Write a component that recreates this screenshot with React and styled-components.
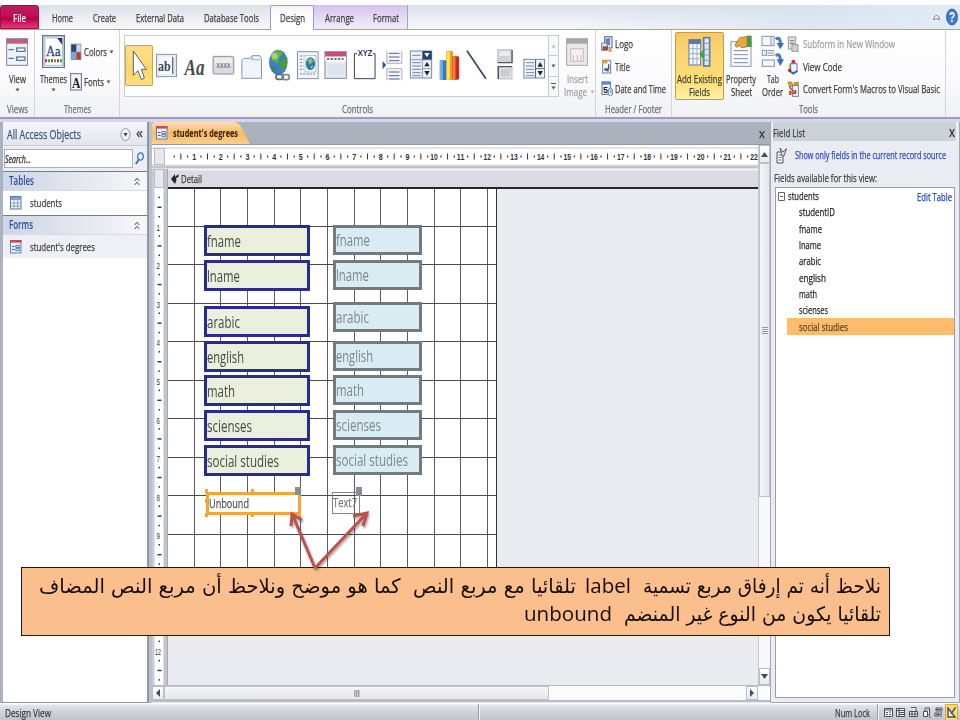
import React, { useLayoutEffect, useRef } from "react";
import styled, { createGlobalStyle, css } from "styled-components";

const Global = createGlobalStyle`
  * { box-sizing: border-box; }
  html, body { margin: 0; padding: 0; }
  body { width: 960px; height: 720px; overflow: hidden; background: #fff; font-family: "Open Sans", "Noto Sans", sans-serif; }
  svg { display: block; flex: none; }
`;

/* ---------- text that condenses itself to a set width ---------- */
const FitBox = styled.span`
  display: block;
  flex: none;
  direction: ltr;
  text-align: left;
  width: ${(p) => p.$w}px;
  height: ${(p) => p.$h || 14}px;
  line-height: ${(p) => p.$h || 14}px;
  margin: ${(p) => p.$m || "0"};
  font-size: ${(p) => p.$s || 11.5}px;
  font-weight: ${(p) => p.$b || 400};
  font-style: ${(p) => (p.$i ? "italic" : "normal")};
  font-family: ${(p) => p.$f || "inherit"};
  color: ${(p) => p.$c || "#3b3b3b"};
  -webkit-text-stroke: ${(p) => (p.$f || p.$s > 15 || p.$b ? 0 : 0.25)}px currentColor;
`;
const FitInner = styled.span`
  display: inline-block;
  white-space: pre;
  transform-origin: 0 50%;
`;
function Fit({ w, h, s, b, i, c, m, f, dir, children }) {
  const ref = useRef(null);
  useLayoutEffect(() => {
    const el = ref.current;
    el.style.transform = "none";
    el.style.transform = `scaleX(${w / el.getBoundingClientRect().width})`;
  }, [w, children]);
  return (
    <FitBox $w={w} $h={h} $s={s} $b={b} $i={i} $c={c} $m={m} $f={f}>
      <FitInner ref={ref} dir={dir}>{children}</FitInner>
    </FitBox>
  );
}

function Icon({ x, y, w, h, children }) {
  return (
    <svg width={w / 3} height={h / 3} viewBox={`${x} ${y} ${w} ${h}`}>
      {children}
    </svg>
  );
}

const Down = ({ c = "#555" }) => (
  <svg width="5" height="4" viewBox="0 0 5 4"><path d="M0.5 0.5H4.5L2.5 3.5Z" fill={c} /></svg>
);

/* ---------- page ---------- */
const Page = styled.div`
  position: relative;
  width: 960px;
  height: 720px;
  padding-top: 5px;
  display: flex;
  flex-direction: column;
  background: #fdfdfe;
  overflow: hidden;
`;

/* ---------- ribbon tabs ---------- */
const TabStrip = styled.div`
  height: 25px;
  flex: none;
  display: flex;
  background: linear-gradient(90deg, rgba(255,255,255,0) 60%, rgba(213,226,241,.7) 84%, rgba(225,236,248,.9)), linear-gradient(#d9e2e8, #e9ecf0 45%, #f6f7fa);
  border-bottom: 1px solid #ab98cf;
`;
const RibbonTab = styled.div`
  width: ${(p) => p.$w}px;
  flex: none;
  height: 24px;
  display: flex;
  align-items: center;
  justify-content: center;
  padding-top: 2px;
  ${(p) => p.$kind === "file" && css`
    background: linear-gradient(#b52257, #c40d54 45%, #b5003f 55%, #df3a80);
    border: 1px solid #a30c45;
    border-radius: 3px 3px 0 0;
  `}
  ${(p) => p.$kind === "ctx" && css`background: linear-gradient(#d3c4ee, #e6def5 60%, #f1edf9);`}
  ${(p) => p.$kind === "active" && css`
    height: 25px;
    padding-top: 0;
    background: linear-gradient(#f6f2fc, #fff 50%);
    border: 1px solid #a993cf;
    border-bottom: 0;
    border-radius: 2px 2px 0 0;
  `}
`;
const CtxEnd = styled.div`width: 1px; background: #a9a0c4; height: 24px;`;
const TabRight = styled.div`
  margin-left: auto;
  display: flex;
  align-items: center;
  gap: 6px;
  padding-right: 2px;
`;

/* ---------- ribbon ---------- */
const Ribbon = styled.div`
  height: 89px;
  flex: none;
  display: flex;
  background: linear-gradient(#fff, #fbfbfd 55%, #f0f1f5);
  border-bottom: 2px solid #a397c6;
`;
const Group = styled.div`
  width: ${(p) => p.$w}px;
  flex: none;
  display: flex;
  flex-direction: column;
  border-right: 1px solid #d5d3de;
`;
const GroupMain = styled.div`height: 72px; display: flex; padding: ${(p) => p.$p || "0"};`;
const GroupName = styled.div`height: 15px; display: flex; justify-content: center;`;
const BigButton = styled.div`
  width: ${(p) => p.$w}px;
  height: 68px;
  flex: none;
  margin: ${(p) => p.$m || "0"};
  padding-top: ${(p) => p.$t ?? 3}px;
  display: flex;
  flex-direction: column;
  align-items: center;
  ${(p) => p.$on && css`
    border: 1px solid #c59b3c;
    border-radius: 2px;
    background: linear-gradient(#f8c866, #fbd674 35%, #fddf79 75%, #fff3a6);
  `}
`;
const IconSlot = styled.div`height: 35px; display: flex; align-items: center;`;
const SmallStack = styled.div`display: flex; flex-direction: column; padding-top: ${(p) => p.$t}px; gap: ${(p) => p.$g}px;`;
const SmallRow = styled.div`height: 18px; display: flex; align-items: center; gap: ${(p) => p.$g || 2}px;`;
const IconBox = styled.div`width: 12px; display: flex; justify-content: center;`;

const Gallery = styled.div`
  width: 435px;
  height: 62px;
  display: flex;
  border: 1px solid #c9ccd3;
  background: #fff;
`;
const Cells = styled.div`display: grid; grid-template-columns: repeat(15, 28.2px); padding-top: 9px; flex: 1;`;
const Cell = styled.div`
  height: 41px;
  svg { overflow: visible; }
  ${(p) => p.$on && css`
    background: linear-gradient(#fbe08a, #fcd66b 60%, #fce27f);
    outline: 1px solid #caa24a;
    outline-offset: -1px;
    border-radius: 2px;
  `}
`;
const GalleryBar = styled.div`width: 10px; display: flex; flex-direction: column; border-left: 1px solid #c9ccd3;`;
const GalleryStep = styled.div`
  flex: 1;
  display: flex;
  flex-direction: column;
  gap: 2px;
  align-items: center;
  justify-content: center;
  background: #f7f8fa;
  & + & { border-top: 1px solid #c9ccd3; }
`;
const Bar = styled.div`width: 5px; height: 1px; background: #555;`;
const ArrowRow = styled.div`display: flex; align-items: center; gap: 3px; padding-left: 5px;`;

const galleryArt = [
  <path key="0" d="M400 153V226L414 212L424 239L433 234L424 208H439Z" fill="#fff" stroke="#596070" strokeWidth="3" />,
  <g key="1"><rect x="470" y="163" width="60" height="67" fill="#e3ebf5" stroke="#8a94a5" strokeWidth="3" /><rect x="478" y="170" width="44" height="53" fill="#f7fafd" /><text x="475" y="214" fontSize="46" fontFamily="Liberation Serif, serif" fontWeight="700" fill="#3f4650" textLength="38" lengthAdjust="spacingAndGlyphs">ab</text><path d="M519 171V222" stroke="#333" strokeWidth="3" /></g>,
  <text key="2" x="555" y="224" fontSize="68" fontFamily="Liberation Serif, serif" fontStyle="italic" fontWeight="700" fill="#4a4a4a" textLength="60" lengthAdjust="spacingAndGlyphs">Aa</text>,
  <g key="3"><rect x="638" y="169" width="62" height="53" rx="3" fill="#d9dbe0" stroke="#8d919b" strokeWidth="3" /><rect x="643" y="174" width="52" height="20" fill="#edeef1" /><text x="648" y="204" fontSize="28" fontFamily="Liberation Sans, sans-serif" fill="#55606e" textLength="42" lengthAdjust="spacingAndGlyphs">xxxx</text></g>,
  <g key="4"><path d="M725 235V182L731 175H750L755 167H779L784 176V235Z" fill="#f1f5fb" stroke="#7f93b5" strokeWidth="3" /><path d="M752 179H780M757 170V178" stroke="#9cb0cd" strokeWidth="3" fill="none" /></g>,
  <g key="5"><ellipse cx="835" cy="187" rx="28" ry="38" fill="#3c7ed0" /><path d="M812 168Q822 148 842 150L850 160L838 172L834 190L818 184Z" fill="#63b23e" /><path d="M846 176L862 172L861 196L848 213L838 198Z" fill="#4d9c33" /><path d="M812 195L826 203L828 219L818 212Z" fill="#2f8b46" /><ellipse cx="824" cy="168" rx="9" ry="10" fill="#b8e39a" opacity=".7" /><rect x="828" y="223" width="22" height="15" rx="7" fill="none" stroke="#5d6679" strokeWidth="5" /><rect x="846" y="224" width="22" height="15" rx="7" fill="none" stroke="#7c869a" strokeWidth="5" /></g>,
  <g key="6"><rect x="893" y="155" width="62" height="81" fill="#f0f5fa" stroke="#8393aa" strokeWidth="3" /><rect x="916" y="166" width="32" height="50" fill="#fff" stroke="#9aabbe" strokeWidth="2" /><ellipse cx="932" cy="191" rx="14" ry="19" fill="#2f79a8" /><path d="M923 180L934 174L940 184L930 194Z M930 200L940 196L937 207Z" fill="#7fc78b" /><path d="M900 168H912M900 178H912M900 188H912M900 198H912M900 208H912M900 222H946" stroke="#7a8ca8" strokeWidth="3" strokeDasharray="7 3" /></g>,
  <g key="7"><rect x="976" y="155" width="64" height="80" fill="#e9eef5" stroke="#7f8798" strokeWidth="3" /><rect x="977" y="156" width="62" height="14" fill="#c84c77" /><rect x="977" y="170" width="62" height="14" fill="#fff" /><path d="M982 177H1032" stroke="#445" strokeWidth="5" strokeDasharray="7 4" /><rect x="984" y="191" width="48" height="36" fill="#dbe4ef" /></g>,
  <g key="8"><path d="M1070 161H1062V236H1124V161H1117" fill="none" stroke="#39404c" strokeWidth="3" /><text x="1072" y="169" fontSize="26" fontWeight="700" fontFamily="Liberation Sans, sans-serif" fill="#1f3565" textLength="44" lengthAdjust="spacingAndGlyphs">XYZ</text></g>,
  <g key="9"><path d="M1147 183L1158 195L1147 208Z" fill="#2e5796" /><path d="M1160 153V190H1205V153" fill="#f3f5f8" stroke="#8591a5" strokeWidth="2" /><path d="M1160 241V206H1205V241" fill="#f3f5f8" stroke="#8591a5" strokeWidth="2" /><path d="M1166 160H1198M1166 171H1198M1166 182H1198M1166 216H1198M1166 227H1198M1166 237H1198" stroke="#4f678f" strokeWidth="3" /></g>,
  <g key="10"><rect x="1231" y="153" width="64" height="81" fill="#eaf0f7" stroke="#7286a5" strokeWidth="3" /><rect x="1267" y="153" width="28" height="26" fill="#25406f" /><path d="M1273 159H1289L1281 172Z" fill="#fff" /><path d="M1267 179V234M1267 206H1294M1231 179H1294" stroke="#60718e" strokeWidth="2" /><path d="M1273 199L1281 186L1289 199ZM1273 213H1289L1281 227Z" fill="#222" /><path d="M1237 166H1262M1237 188H1262M1237 198H1262M1237 208H1262M1237 218H1262M1237 227H1262" stroke="#7187a9" strokeWidth="3" /></g>,
  <g key="11"><rect x="1320" y="181" width="21" height="59" rx="3" fill="#3278c4" /><rect x="1320" y="181" width="9" height="59" fill="#72afe9" /><rect x="1339" y="153" width="21" height="87" rx="4" fill="#e6a70c" /><rect x="1341" y="155" width="9" height="84" fill="#ffe06a" /><rect x="1358" y="169" width="20" height="70" rx="4" fill="#c92b16" /><rect x="1359" y="171" width="8" height="67" fill="#f6765a" /></g>,
  <path key="12" d="M1402 152L1459 236" stroke="#33485f" strokeWidth="5" />,
  <g key="13"><rect x="1495" y="149" width="43" height="38" fill="#d2d3d6" stroke="#b0b2b7" strokeWidth="2" /><path d="M1495 188H1538V150" fill="none" stroke="#55585f" strokeWidth="4" /><rect x="1500" y="154" width="30" height="14" fill="#ececee" /><rect x="1495" y="199" width="43" height="38" fill="#dedfe2" stroke="#a4a7ad" strokeWidth="2" /><path d="M1497 237V200H1538" fill="none" stroke="#55585f" strokeWidth="4" /><rect x="1505" y="208" width="26" height="21" fill="#c9cbcf" /></g>,
  <g key="14"><rect x="1571" y="178" width="62" height="56" fill="#eef3f9" stroke="#7286a5" strokeWidth="3" /><path d="M1606 178V234M1606 206H1633" stroke="#4f6180" strokeWidth="3" /><path d="M1612 200L1620 186L1628 200ZM1612 213H1628L1620 227Z" fill="#222" /><path d="M1577 188H1602M1577 198H1602M1577 208H1602M1577 218H1602M1577 227H1602" stroke="#7187a9" strokeWidth="3" /></g>,
];

const FormGlyph = ({ dim }) => (
  <Icon x={18} y={113} w={68} h={84}>
    <rect x="20" y="115" width="63" height="80" fill={dim ? "#e9e9eb" : "#eef3f9"} stroke={dim ? "#a8a8ad" : "#7586a0"} strokeWidth="3" />
    <rect x="20" y="116" width="63" height="14" fill={dim ? "#a5a5aa" : "#cc5a7f"} />
    {dim ? (
      <path d="M32 145H70V183H32ZM40 165V183M52 165V183M63 165V183" stroke="#c9b9be" strokeWidth="3" fill="#f4eff1" />
    ) : (
      <g fill="none" stroke="#66799a" strokeWidth="4"><path d="M25 148H42M25 174H42" /><rect x="50" y="143" width="25" height="10" fill="#fff" /><rect x="50" y="170" width="25" height="10" fill="#fff" /></g>
    )}
  </Icon>
);

function RibbonArea() {
  return (
    <Ribbon>
      <Group $w={35}>
        <GroupMain>
          <BigButton $w={34} $m="1px 0 0">
            <IconSlot><FormGlyph /></IconSlot>
            <Fit w={17} m="3px 0 2px">View</Fit>
            <Down />
          </BigButton>
        </GroupMain>
        <GroupName><Fit w={21} c="#6b6b73">Views</Fit></GroupName>
      </Group>
      <Group $w={85}>
        <GroupMain>
          <BigButton $w={33} $m="1px 0 0 2px">
            <IconSlot>
              <Icon x={126} y={104} w={70} h={100}>
                <rect x="128" y="106" width="65" height="96" fill="#dfe6f1" stroke="#66748c" strokeWidth="4" />
                <path d="M135 113H172L187 132V195H135Z" fill="#fff" stroke="#9aa6b8" strokeWidth="2" />
                <path d="M172 113H187V134Z" fill="#20386c" />
                <text x="138" y="166" fontSize="46" fontFamily="Liberation Serif, serif" fill="#274d87" stroke="#274d87" textLength="44" lengthAdjust="spacingAndGlyphs">Aa</text>
                <path d="M135 181H187" stroke="#c33" strokeWidth="9" strokeDasharray="6 12" />
                <path d="M144 181H187" stroke="#37a34a" strokeWidth="9" strokeDasharray="6 12" />
              </Icon>
            </IconSlot>
            <Fit w={27} m="3px 0 2px">Themes</Fit>
            <Down />
          </BigButton>
          <SmallStack $t={13} $g={12}>
            <SmallRow>
              <Icon x={213} y={128} w={36} h={54}>
                <rect x="215" y="130" width="32" height="49" fill="#8a94a6" />
                <rect x="217" y="133" width="14" height="21" fill="#28466f" /><rect x="233" y="133" width="12" height="21" fill="#c9d7e8" />
                <rect x="217" y="156" width="14" height="21" fill="#7aa2d2" /><rect x="233" y="156" width="12" height="21" fill="#c23b33" />
              </Icon>
              <Fit w={23}>Colors</Fit><Down />
            </SmallRow>
            <SmallRow>
              <Icon x={213} y={218} w={36} h={54}>
                <rect x="215" y="220" width="32" height="49" fill="#f7f9fc" stroke="#5b6b88" strokeWidth="3" />
                <text x="219" y="262" fontSize="42" fontWeight="700" fontFamily="Liberation Serif, serif" fill="#222" textLength="25" lengthAdjust="spacingAndGlyphs">A</text>
              </Icon>
              <Fit w={20}>Fonts</Fit><Down />
            </SmallRow>
          </SmallStack>
        </GroupMain>
        <GroupName><Fit w={27} c="#6b6b73">Themes</Fit></GroupName>
      </Group>
      <Group $w={476}>
        <GroupMain $p="5px 0 0 4px">
          <Gallery>
            <Cells>
              {galleryArt.map((art, n) => (
                <Cell key={n} $on={n === 0}>
                  <svg width="28.2" height="41" viewBox={`${375 + 84.6 * n} 135 84.6 123`}>{art}</svg>
                </Cell>
              ))}
            </Cells>
            <GalleryBar>
              <GalleryStep><svg width="5" height="4"><path d="M.5 3.5h4l-2-3z" fill="#b9bbc2" /></svg></GalleryStep>
              <GalleryStep><Down /></GalleryStep>
              <GalleryStep><Bar /><Down /></GalleryStep>
            </GalleryBar>
          </Gallery>
          <BigButton $w={34} $t={3} $m="-4px 0 0 1px">
            <IconSlot><FormGlyph dim /></IconSlot>
            <Fit w={21} h={13} m="3px 0 0" c="#a0a0a4">Insert</Fit>
            <ArrowRow><Fit w={23} c="#a0a0a4">Image</Fit><Down c="#b5b5ba" /></ArrowRow>
          </BigButton>
        </GroupMain>
        <GroupName><Fit w={31} c="#6b6b73">Controls</Fit></GroupName>
      </Group>
      <HeaderFooter />
      <Tools />
    </Ribbon>
  );
}

function HeaderFooter() {
  return (
    <Group $w={76}>
      <GroupMain $p="0 0 0 5px">
        <SmallStack $t={5} $g={4.5}>
          <SmallRow>
            <IconBox><Icon x={845} y={105} w={36} h={51}>
              <rect x="856" y="107" width="22" height="34" fill="#e7eefa" stroke="#4d6896" strokeWidth="3" />
              <path d="M847 126H864V148H847Z" fill="#dde4ee" stroke="#6b7c9b" strokeWidth="3" />
              <path d="M858 113L872 110V134L860 128Z" fill="#6c81b5" /><path d="M850 136H866V147H850Z" fill="#b2424a" /><circle cx="872" cy="148" r="5" fill="#dd9b32" />
            </Icon></IconBox>
            <Fit w={18}>Logo</Fit>
          </SmallRow>
          <SmallRow>
            <IconBox><Icon x={845} y={174} w={36} h={48}>
              <rect x="850" y="178" width="24" height="38" fill="#f2f5f9" stroke="#71809b" strokeWidth="3" />
              <path d="M848 178H864V187H848Z" fill="#dc9b43" /><path d="M855 206L868 210M868 190V204H856" stroke="#405a86" strokeWidth="4" fill="none" />
            </Icon></IconBox>
            <Fit w={15}>Title</Fit>
          </SmallRow>
          <SmallRow>
            <IconBox><Icon x={843} y={241} w={38} h={48}>
              <rect x="846" y="244" width="25" height="37" fill="#fff" stroke="#4c6ea6" strokeWidth="3" /><rect x="846" y="243" width="25" height="9" fill="#5b87cc" />
              <text x="849" y="278" fontSize="29" fontWeight="700" fontFamily="Liberation Sans, sans-serif" fill="#222" textLength="15" lengthAdjust="spacingAndGlyphs">5</text>
              <ellipse cx="871" cy="274" rx="7" ry="12" fill="#e8f0fa" stroke="#6483ae" strokeWidth="3" /><path d="M871 267V275H875" stroke="#456" strokeWidth="2" fill="none" />
            </Icon></IconBox>
            <Fit w={51}>Date and Time</Fit>
          </SmallRow>
        </SmallStack>
      </GroupMain>
      <GroupName><Fit w={57} c="#6b6b73">Header / Footer</Fit></GroupName>
    </Group>
  );
}

function Tools() {
  return (
    <Group $w={274}>
      <GroupMain $p="2px 0 0 3px">
        <BigButton $w={49} $on $t={1}>
          <IconSlot>
            <Icon x={143} y={105} w={68} h={96}>
              <rect x="146" y="116" width="35" height="76" fill="#f5f8fc" stroke="#5877a5" strokeWidth="3" /><rect x="146" y="115" width="35" height="14" fill="#5579b3" />
              <path d="M146 143H181M146 158H181M146 173H181M158 129V192M170 129V192" stroke="#98afd0" strokeWidth="3" />
              <rect x="190" y="110" width="18" height="85" fill="#dce6f4" stroke="#5e7eaf" strokeWidth="5" /><path d="M190 127H208M190 145H208M190 162H208M190 178H208" stroke="#7e9cc6" strokeWidth="3" />
              <path d="M177 160L192 143V177Z" fill="#3da637" />
            </Icon>
          </IconSlot>
          <Fit w={45} h={13} m="3px 0 0">Add Existing</Fit>
          <Fit w={21} h={14}>Fields</Fit>
        </BigButton>
        <BigButton $w={34} $t={2}>
          <IconSlot>
            <Icon x={268} y={103} w={68} h={98}>
              <rect x="271" y="123" width="60" height="74" fill="#f8fafd" stroke="#8795ad" strokeWidth="3" />
              <path d="M279 150H322M279 162H322M279 174H322M279 186H322" stroke="#758caf" strokeWidth="3" />
              <path d="M283 132L297 111L320 107V138L304 142L297 135L287 140Z" fill="#e9a63a" stroke="#8a6322" strokeWidth="2" /><rect x="319" y="105" width="14" height="34" fill="#499a4c" />
            </Icon>
          </IconSlot>
          <Fit w={30} h={13} m="3px 0 0">Property</Fit>
          <Fit w={21} h={14}>Sheet</Fit>
        </BigButton>
        <BigButton $w={29} $t={2}>
          <IconSlot>
            <Icon x={362} y={103} w={70} h={98}>
              <g fill="#f4f7fb" stroke="#8592a9" strokeWidth="3"><rect x="365" y="107" width="36" height="28" /><path d="M392 107V135" /><rect x="366" y="149" width="12" height="15" /><path d="M381 150H402M381 157H402M381 164H402" /><rect x="366" y="178" width="36" height="19" /></g>
              <path d="M406 116Q420 106 420 130M406 165Q420 155 420 180" fill="none" stroke="#4a7ac6" strokeWidth="9" />
              <path d="M409 127H431L420 146ZM409 176H431L420 196Z" fill="#3f6db8" />
            </Icon>
          </IconSlot>
          <Fit w={12} h={13} m="3px 0 0">Tab</Fit>
          <Fit w={21} h={14}>Order</Fit>
        </BigButton>
        <SmallStack $t={3} $g={4.5}>
          <SmallRow $g={3.5}>
            <IconBox><Icon x={448} y={105} w={36} h={50}>
              <rect x="452" y="108" width="22" height="36" fill="#e1e1e3" stroke="#98989c" strokeWidth="3" /><path d="M456 119H470M456 127H470" stroke="#8d8d92" strokeWidth="4" /><rect x="463" y="131" width="18" height="21" fill="#d0d0d3" stroke="#98989c" strokeWidth="3" />
            </Icon></IconBox>
            <Fit w={92} c="#a0a0a4">Subform in New Window</Fit>
          </SmallRow>
          <SmallRow $g={3.5}>
            <IconBox><Icon x={448} y={173} w={36} h={48}>
              <circle cx="467" cy="181" r="6" fill="#d92f2a" /><path d="M453 190L462 183V207L453 212Z" fill="#e9b33d" /><path d="M459 187H478V213H459Z" fill="#f1f5fc" stroke="#5675ae" strokeWidth="3" /><path d="M453 207L467 217L479 208" stroke="#355eae" strokeWidth="5" fill="none" /><circle cx="456" cy="207" r="5" fill="#c92925" />
            </Icon></IconBox>
            <Fit w={39}>View Code</Fit>
          </SmallRow>
          <SmallRow $g={3.5}>
            <IconBox><Icon x={446} y={240} w={38} h={50}>
              <path d="M449 244L460 243L465 255L454 259ZM468 245L480 243V252H468Z" fill="#d8a541" stroke="#8b6b26" strokeWidth="2" /><rect x="463" y="254" width="17" height="32" fill="#fff" stroke="#667ba1" strokeWidth="3" /><path d="M453 259L472 277M472 266V277H462" stroke="#cc3332" strokeWidth="4" fill="none" /><rect x="452" y="269" width="8" height="13" fill="#d34f41" />
            </Icon></IconBox>
            <Fit w={137}>Convert Form's Macros to Visual Basic</Fit>
          </SmallRow>
        </SmallStack>
      </GroupMain>
      <GroupName><Fit w={19} c="#6b6b73">Tools</Fit></GroupName>
    </Group>
  );
}

/* ---------- workspace ---------- */
const Work = styled.div`
  height: 584px;
  flex: none;
  display: flex;
  border-top: 3px solid #d9d7e5;
  background: #c0c7d0;
`;

/* navigation pane */
const Nav = styled.div`
  width: 149px;
  flex: none;
  display: flex;
  flex-direction: column;
  background: #fff;
  border-left: 3px solid #a9b2be;
  border-right: 2px solid #8e97a4;
  border-bottom: 1px solid #8e97a4;
`;
const NavHead = styled.div`
  height: 24px;
  display: flex;
  align-items: center;
  padding: 2px 4px 0 4px;
  background: linear-gradient(#f5f6fa, #e1e5ee);
  border-bottom: 1px solid #c7cbd6;
`;
const NavTools = styled.div`margin-left: auto; display: flex; align-items: center; gap: 5px;`;
const SearchRow = styled.div`height: 25px; padding: 3px 3px 3px 1px; display: flex; align-items: center; gap: 2px; background: #eceef3;`;
const SearchBox = styled.div`width: 130px; height: 19px; border: 1px solid #a8b0bf; background: #fff; display: flex; align-items: center;`;
const Section = styled.div`
  height: 20px;
  display: flex;
  align-items: center;
  justify-content: space-between;
  padding: 0 7px 0 6px;
  background: linear-gradient(90deg, #cdd7e6, #e2e6ee 50%, #f7f7fa);
  border-top: 1px solid #747b87;
  border-bottom: 1px solid #d5dae4;
`;
const NavItem = styled.div`
  height: ${(p) => p.$h}px;
  display: flex;
  align-items: center;
  padding-left: 7px;
  gap: 8px;
  background: ${(p) => (p.$shade ? "#eff0f5" : "#fff")};
`;
const Chev = () => (
  <svg width="6" height="9" viewBox="0 0 6 9"><path d="M.7 4L3 1.2L5.3 4M.7 8L3 5.2L5.3 8" stroke="#454b57" fill="none" /></svg>
);
const TableIcon = () => (
  <svg width="12" height="14" viewBox="0 0 12 14"><rect x=".5" y=".5" width="10.5" height="12.5" fill="#fff" stroke="#5878aa" /><rect x="1" y="1" width="10" height="3" fill="#7fa0d2" /><path d="M1 7h10M1 10h10M4 4v9M7.7 4v9" stroke="#7f9cc8" /></svg>
);
const FormIcon = () => (
  <svg width="12" height="14" viewBox="0 0 12 14"><rect x=".5" y=".5" width="10.5" height="12.5" fill="#eaf0fa" stroke="#6480ad" /><rect x="0" y="0" width="11.5" height="2.600" fill="#c84860" /><path d="M2 6.5h2.500M2 9.5h2.500" stroke="#315ca0" strokeWidth="1" /><path d="M5.800 5.500h3.700v2h-3.700zM5.800 8.700h3.700v2h-3.700z" stroke="#315ca0" strokeWidth=".8" fill="#fff" /></svg>
);

/* document */
const Doc = styled.div`width: 621px; flex: none; display: flex; flex-direction: column; padding-left: 3px; background: #b9c0ca;`;
const DocTabs = styled.div`
  height: 23px;
  display: flex;
  align-items: flex-end;
  justify-content: space-between;
  padding-right: 5px;
  background: linear-gradient(#aab4bf, #a8b0bb);
  border-bottom: 1px solid #8f98a4;
`;
const DocTab = styled.div`
  width: 98px;
  height: 22px;
  display: flex;
  align-items: center;
  gap: 5px;
  padding-left: 4px;
  background: linear-gradient(#fbe1b8, #fab95f 50%, #fbd08c);
  clip-path: polygon(0 2px, 2px 0, 83px 0, 88px 3px, 98px 100%, 0 100%);
`;
const DocBody = styled.div`flex: 1; display: grid; grid-template-columns: 606px 12px; grid-template-rows: 540px 17px; background: #e9ebf0;`;
const Design = styled.div`display: flex; flex-direction: column; min-width: 0; overflow: hidden;`;
const RulerRow = styled.div`height: 24px; display: flex; flex: none; padding: 3px 0; background: linear-gradient(#fff 2px, #c9c9d2 3px, #fff 4px, #fff 19px, #b5b5bd 22px, #eee);`;
const Corner = styled.div`width: ${(p) => p.$w}px; height: ${(p) => p.$h}px; flex: none; margin: ${(p) => p.$m || "0"}; border: 1px solid #b9bbc6; background: #e6e7ef;`;
const Lower = styled.div`flex: 1; display: flex; min-height: 0;`;
const VRuler = styled.div`width: 16px; flex: none; display: flex; flex-direction: column; background: linear-gradient(90deg, #c9ccd6 0 2px, #fff 3px 11px, #c3c5cc 12px 15px, #8d8f97 16px);`;
const Surface = styled.div`flex: 1; display: flex; flex-direction: column; min-width: 0;`;
const Band = styled.div`height: 20px; flex: none; padding-top: 1px; display: flex; align-items: center; gap: 2px; padding-left: 3px; background: linear-gradient(#fff, #dcdae5 2px); border-bottom: 2px solid #24262c;`;
const Canvas = styled.div`position: relative; flex: 1; background: #e9ebf0;`;
const ControlBox = styled.div`
  position: absolute;
  left: ${(p) => p.$x}px;
  top: ${(p) => p.$y}px;
  width: ${(p) => p.$w}px;
  height: ${(p) => p.$h}px;
  display: flex;
  align-items: center;
  ${(p) => p.$kind === "box" && css`border: 3px solid #2a2b8c; background: #ebf0de;`}
  ${(p) => p.$kind === "label" && css`border: 3px solid #737b7e; background: #daecf3;`}
  ${(p) => p.$kind === "unbound" && css`border: 3px solid #f6a437; background: #fff;`}
  ${(p) => p.$kind === "text" && css`border: 1px solid #858585;`}
`;
const Handle = styled.div`
  position: absolute;
  left: ${(p) => p.$x}px;
  top: ${(p) => p.$y}px;
  width: ${(p) => p.$w}px;
  height: ${(p) => p.$h}px;
  background: ${(p) => p.$c};
`;
const VScroll = styled.div`display: flex; flex-direction: column; background: #f8f8fa; border-left: 1px solid #c5c8cf; justify-content: space-between;`;
const HScroll = styled.div`grid-column: 1 / 3; display: flex; background: #fbfbfc; border-top: 1px solid #b7bac2; padding-right: 12px; justify-content: space-between; border-bottom: 2px solid #b6bcc6;`;
const Start = styled.div`display: flex; flex-direction: ${(p) => p.$d};`;
const ScrollBtn = styled.div`width: ${(p) => p.$w}px; height: ${(p) => p.$h}px; border: 1px solid #b9bdc6; background: linear-gradient(#fff, #e8eaef); display: flex; align-items: center; justify-content: center;`;
const Thumb = styled.div`width: ${(p) => p.$w}px; height: ${(p) => p.$h}px; border: 1px solid #c0c3ca; background: linear-gradient(${(p) => (p.$vertical ? "90deg" : "180deg")}, #f6f6f8, #e4e6eb); display: flex; align-items: center; justify-content: center;`;
const Grip = styled.div`width: 6px; height: 7px; background: ${(p) => (p.$vertical ? "repeating-linear-gradient(#92959d 0 1px, #f3f3f5 1px 2px)" : "repeating-linear-gradient(90deg, #a4a7ae 0 1px, #c3c5ca 1px 2px)")};`;

/* caption, top of the text box, top of its label, caption width */
const rows = [
  ["fname", 36, 36, 34], ["lname", 71, 71, 33], ["arabic", 117, 113, 33], ["english", 152, 152, 37],
  ["math", 186, 186, 28], ["scienses", 221, 221, 45], ["social studies", 256, 256, 72],
];
const gridX = Array.from({ length: 12 }, (_, n) => Math.round(26.67 * (n + 1)));
const gridY = Array.from({ length: 11 }, (_, n) => Math.round(38.55 * (n + 1)) - 1);

function DesignCanvas() {
  return (
    <Canvas>
      <svg width="330" height="446" shapeRendering="crispEdges">
        <rect width="329" height="446" fill="#fff" />
        <path d={gridX.map((x) => `M${x - 0.5} 0V446`).join("")} stroke="#5c5d62" />
        <path d={gridY.map((y) => `M0 ${y - 0.5}H329`).join("")} stroke="#4a4b50" />
        <path d="M328.5 0V446" stroke="#333" />
      </svg>
      {rows.map(([t, y, , w]) => (
        <ControlBox key={t} $kind="box" $x={36} $y={y} $w={106} $h={31}>
          <Fit w={w} s={15.5} h={22} c="#454a42">{t}</Fit>
        </ControlBox>
      ))}
      {rows.map(([t, , y, w]) => (
        <ControlBox key={t} $kind="label" $x={165} $y={y} $w={89} $h={30}>
          <Fit w={w} s={15.5} h={22} c="#7c878b">{t}</Fit>
        </ControlBox>
      ))}
      <ControlBox $kind="unbound" $x={38} $y={303} $w={95} $h={23}><Fit w={40} s={12} c="#555">Unbound</Fit></ControlBox>
      {[[37, 300], [83, 300], [37, 310], [37, 324], [83, 324], [130, 324]].map(([x, y]) => (
        <Handle key={`${x}-${y}`} $x={x} $y={y} $w={3} $h={4} $c="#f6a437" />
      ))}
      <Handle $x={127} $y={298} $w={6} $h={8} $c="#8b8b95" />
      <ControlBox $kind="text" $x={164} $y={303} $w={28} $h={22}><Fit w={24} s={12} c="#777">Text7</Fit></ControlBox>
      <Handle $x={188} $y={298} $w={6} $h={9} $c="#8b8b95" />
    </Canvas>
  );
}

function HorizontalRuler() {
  const at = (n) => 26.67 * n + 0.5;
  return (
    <svg width="591" height="17" viewBox="0 0 591 17" fontFamily="Liberation Sans, sans-serif" fontSize="9.5" fontWeight="700" fill="#333">
      {Array.from({ length: 22 }, (_, i) => (
        <g key={i}>
          <rect x={at(i + 0.25) - 0.5} y="7.5" width="1.2" height="2" />
          <rect x={at(i + 0.5) - 0.5} y="5.5" width="1" height="6" />
          <rect x={at(i + 0.75) - 0.5} y="7.5" width="1.2" height="2" />
          <text x={at(i + 1) - (i > 8 ? 4 : 2)} y="12" textLength={i > 8 ? 7.5 : 4} lengthAdjust="spacingAndGlyphs">{i + 1}</text>
        </g>
      ))}
    </svg>
  );
}

function VerticalRuler() {
  return (
    <svg width="15" height="496" viewBox="0 0 15 496" fontFamily="Liberation Sans, sans-serif" fontSize="9.5" fill="#333">
      {Array.from({ length: 13 }, (_, i) => (
        <g key={i}>
          <rect x="6.5" y={38.6 * (i + 0.25) - 1} width="1.5" height="1.5" />
          <rect x="5.5" y={38.6 * (i + 0.5) - 0.7} width="4" height="1.4" />
          <rect x="6.5" y={38.6 * (i + 0.75) - 1} width="1.5" height="1.5" />
          {i < 12 && <text x={i > 8 ? 3 : 4.5} y={38.6 * (i + 1) + 4} textLength={i > 8 ? 6 : 3.5} lengthAdjust="spacingAndGlyphs">{i + 1}</text>}
        </g>
      ))}
    </svg>
  );
}

/* field list */
const Panel = styled.div`width: 190px; flex: none; display: flex; flex-direction: column; padding: 0 3px 3px 2px; background: #e9ecf2; border: 1px solid #a2a9b4; border-top: 0;`;
const PanelHead = styled.div`height: 19px; display: flex; align-items: center; justify-content: space-between; padding: 2px 1px 0 0; background: #cbd1d9;`;
const PanelLink = styled.div`height: 28px; display: flex; align-items: center; gap: 8px; padding-left: 3px;`;
const FieldBox = styled.div`width: 180px; height: 511px; margin-left: 2px; border: 1px solid #979faa; background: #fff; display: flex; flex-direction: column;`;
const TreeHead = styled.div`height: 16px; display: flex; align-items: center; justify-content: space-between; padding: 0 2px;`;
const TreeName = styled.div`display: flex; align-items: center; gap: 3px;`;
const Field = styled.div`
  height: 16.35px;
  margin-left: 11px;
  padding-left: 12px;
  display: flex;
  align-items: center;
  background: ${(p) => (p.$on ? "#fdbd6c" : "transparent")};
`;
const fields = [["studentID", 36], ["fname", 23], ["lname", 22], ["arabic", 22], ["english", 27], ["math", 18], ["scienses", 29], ["social studies", 49]];

/* status bar */
const Status = styled.div`
  flex: 1;
  display: flex;
  align-items: center;
  background: linear-gradient(#fff 0 1px, #e3e5e9 2px, #d0d3d8 50%, #bfc3c9);
  padding: 1px 2px 0 5px;
`;
const Divider = styled.div`width: 2px; height: 17px; background: linear-gradient(90deg, #9b9fa7 50%, #f1f1f4 50%); margin: ${(p) => p.$m};`;
const ViewBtn = styled.div`width: 12.9px; height: 17px; display: flex; align-items: center; justify-content: center; ${(p) => p.$on && css`background: #fbdc6c; outline: 1px solid #d2a945; outline-offset: -1px;`}`;

/* annotation over the window */
const Note = styled.div`
  position: absolute;
  left: 21px;
  top: 567px;
  width: 869px;
  height: 69px;
  border: 1px solid #1f1720;
  background: #fbbf8e;
  padding: 4px 8px 0;
`;
const NoteLine = styled.div`display: flex; flex-direction: row-reverse; height: 28px; align-items: center; gap: ${(p) => p.$g}px;`;
const Arrows = styled.svg`position: absolute; left: 280px; top: 500px; filter: drop-shadow(1px 2px 1px rgba(0,0,0,.35));`;
const AR = '"DejaVu Sans", sans-serif';

export default function App() {
  return (
    <>
      <Global />
      <Page>
        <TabStrip>
          <RibbonTab $w={39} $kind="file"><Fit w={13} c="#fff" b={600}>File</Fit></RibbonTab>
          <RibbonTab $w={46}><Fit w={21}>Home</Fit></RibbonTab>
          <RibbonTab $w={39}><Fit w={23}>Create</Fit></RibbonTab>
          <RibbonTab $w={71}><Fit w={48}>External Data</Fit></RibbonTab>
          <RibbonTab $w={75}><Fit w={55} m="0 3px 0 0">Database Tools</Fit></RibbonTab>
          <RibbonTab $w={44} $kind="active"><Fit w={25}>Design</Fit></RibbonTab>
          <RibbonTab $w={50} $kind="ctx"><Fit w={29}>Arrange</Fit></RibbonTab>
          <RibbonTab $w={43} $kind="ctx"><Fit w={26}>Format</Fit></RibbonTab>
          <CtxEnd />
          <TabRight>
            <svg width="7" height="7" viewBox="0 0 7 7"><path d="M.8 3.7L3.5 1L6.2 3.7V5.5H5L3.5 4L2 5.5H.8Z" fill="#fff" stroke="#555" strokeWidth=".8" /></svg>
            <svg width="12" height="18" viewBox="0 0 12 18"><ellipse cx="6" cy="9" rx="5.5" ry="8" fill="#3f7bcb" stroke="#2f5a9d" strokeWidth=".8" /><text x="3" y="14" fontSize="14" fontWeight="700" fontFamily="Liberation Sans, sans-serif" fill="#fff" textLength="6" lengthAdjust="spacingAndGlyphs">?</text></svg>
          </TabRight>
        </TabStrip>
        <RibbonArea />
        <Work>
          <Nav>
            <NavHead>
              <Fit w={74} s={12.5} h={18} c="#3b5578">All Access Objects</Fit>
              <NavTools>
                <svg width="11" height="15" viewBox="0 0 11 15"><ellipse cx="5.5" cy="7.5" rx="4.5" ry="6" fill="#f2f2f5" stroke="#9195a0" /><path d="M3.3 6H7.7L5.5 9.5Z" fill="#444" /></svg>
                <Fit w={7} s={14} h={16} m="-3px 0 0">«</Fit>
              </NavTools>
            </NavHead>
            <SearchRow>
              <SearchBox><Fit w={26} s={11} i c="#222">Search...</Fit></SearchBox>
              <svg width="9" height="13" viewBox="0 0 9 13"><ellipse cx="5.5" cy="4.5" rx="2.8" ry="3.7" fill="#e8f2fc" stroke="#3472bd" strokeWidth="1.3" /><path d="M3.5 8L.8 12" stroke="#3472bd" strokeWidth="1.8" /></svg>
            </SearchRow>
            <Section><Fit w={25} b={600} s={12} c="#2a4a9a">Tables</Fit><Chev /></Section>
            <NavItem $h={24}><TableIcon /><Fit w={32}>students</Fit></NavItem>
            <Section><Fit w={24} b={600} s={12} c="#2a4a9a">Forms</Fit><Chev /></Section>
            <NavItem $h={23} $shade><FormIcon /><Fit w={65}>student's degrees</Fit></NavItem>
          </Nav>
          <Doc>
            <DocTabs>
              <DocTab><FormIcon /><Fit w={65} b={700} s={11} c="#30220f">student's degrees</Fit></DocTab>
              <Fit w={6} s={12} h={21} c="#333">x</Fit>
            </DocTabs>
            <DocBody>
              <Design>
                <RulerRow>
                  <Corner $w={11} $h={17} $m="0 2px" />
                  <HorizontalRuler />
                </RulerRow>
                <Lower>
                  <VRuler>
                    <Corner $w={10} $h={19} $m="0 0 0 2px" />
                    <VerticalRuler />
                  </VRuler>
                  <Surface>
                    <Band>
                      <svg width="8" height="10" viewBox="0 0 8 10"><path d="M0 5L4 0V3L7.5 0V3Q4 4 5.5 6L4 10Z" fill="#222" /></svg>
                      <Fit w={21}>Detail</Fit>
                    </Band>
                    <DesignCanvas />
                  </Surface>
                </Lower>
              </Design>
              <VScroll>
                <Start $d="column">
                  <ScrollBtn $w={11} $h={18}><svg width="7" height="5"><path d="M0 5h7l-3.500-5z" fill="#454b5c" /></svg></ScrollBtn>
                  <Thumb $vertical $w={11} $h={334}><Grip $vertical /></Thumb>
                </Start>
                <ScrollBtn $w={11} $h={17}><svg width="7" height="5"><path d="M0 0h7l-3.500 5z" fill="#454b5c" /></svg></ScrollBtn>
              </VScroll>
              <HScroll>
                <Start $d="row">
                  <ScrollBtn $w={12} $h={14}><svg width="4" height="8"><path d="M4 0v8l-4-4z" fill="#454b5c" /></svg></ScrollBtn>
                  <Thumb $w={385} $h={14}><Grip /></Thumb>
                </Start>
                <ScrollBtn $w={12} $h={14}><svg width="4" height="8"><path d="M0 0v8l4-4z" fill="#454b5c" /></svg></ScrollBtn>
              </HScroll>
            </DocBody>
          </Doc>
          <Panel>
            <PanelHead><Fit w={32}>Field List</Fit><Fit w={6} b={700} s={10}>X</Fit></PanelHead>
            <PanelLink>
              <svg width="11" height="17" viewBox="0 0 11 17"><path d="M1 5H7V16H1Z" fill="#f4f5f7" stroke="#555" /><path d="M2.500 8h3M2.500 10.500h3M2.500 13h3" stroke="#777" /><path d="M4 1L7 5L10.500 1.500L8 9H6Z" fill="#d6d8dc" stroke="#555" strokeWidth=".9" /></svg>
              <Fit w={151} c="#2846c4">Show only fields in the current record source</Fit>
            </PanelLink>
            <Fit w={103} h={17} m="0 0 1px 1px">Fields available for this view:</Fit>
            <FieldBox>
              <TreeHead>
                <TreeName>
                  <svg width="7" height="9" viewBox="0 0 7 9"><path d="M.5 .5h6v8h-6zM2 4.500h3" fill="#fff" stroke="#666" /></svg>
                  <Fit w={31} c="#222">students</Fit>
                </TreeName>
                <Fit w={35} c="#2040b8" m="1px 0 0">Edit Table</Fit>
              </TreeHead>
              {fields.map(([t, w], n) => (
                <Field key={t} $on={n === 7}><Fit w={w} s={11} c={n === 7 ? "#5d4520" : "#222"}>{t}</Fit></Field>
              ))}
            </FieldBox>
          </Panel>
        </Work>
        <Status>
          <Fit w={46}>Design View</Fit>
          <Divider $m="0 0 0 427px" />
          <Fit w={35} m="0 7px 0 355px">Num Lock</Fit>
          <Divider $m="0 3px 0 0" />
          {[0, 1, 2, 3, 4, 5].map((n) => (
            <ViewBtn key={n} $on={n === 5}>
              <svg width="9" height="11" viewBox="0 0 9 11" fill="#f8f8fa" stroke="#4a4f59">
                {n === 0 && <path d="M.5 1.500h8v8h-8zM.5 3h8M2 5.500h2M5 5h2M2 7.500h2M5 7.500h2" />}
                {n === 1 && <path d="M.5 1.500h8v8h-8zM.5 3.500h8M3 2v7M3 5.500h5M3 7.500h5" />}
                {n === 2 && <path d="M2 .5h5v4M.5 4.500h8v5h-8zM.5 7h8M3 4.500v5M6 4.500v5" />}
                {n === 3 && <path d="M1.500 4.500h4v5h-4zM3 4v-3h4.500v7h-2M4.500 3h2M7 10h2" />}
                {n === 4 && <path d="M2 1h6v3h-6zM1 6h4v3h-4zM7 5v5M2 2.500h5M2 7.500h3" />}
                {n === 5 && <path d="M1 1v9h7zM8.500 .5L4 7" strokeWidth="1.4" />}
              </svg>
            </ViewBtn>
          ))}
        </Status>
        <Note>
          <NoteLine $g={9}>
            <Fit w={238} h={28} s={20} c="#170f0c" f={AR} dir="rtl">نلاحظ أنه تم إرفاق مربع تسمية</Fit>
            <Fit w={46} h={28} s={20} c="#170f0c" m="0 3px 0 0">label</Fit>
            <Fit w={537} h={28} s={20} c="#170f0c" f={AR} dir="rtl">{"تلقائيا مع مربع النص  كما هو موضح ونلاحظ أن مربع النص المضاف"}</Fit>
          </NoteLine>
          <NoteLine $g={12}>
            <Fit w={257} h={28} s={20} c="#170f0c" f={AR} dir="rtl">تلقائيا يكون من النوع غير المنضم</Fit>
            <Fit w={88} h={28} s={20} c="#170f0c">unbound</Fit>
          </NoteLine>
        </Note>
        <Arrows width="95" height="75" viewBox="280 500 95 75">
          <g fill="none" stroke="#c0504d" strokeWidth="3">
            <path d="M315 568L293 516M291 526L292 514L302 520" />
            <path d="M315 568L365 515M353 516L367 513L363 526" />
          </g>
        </Arrows>
      </Page>
    </>
  );
}
